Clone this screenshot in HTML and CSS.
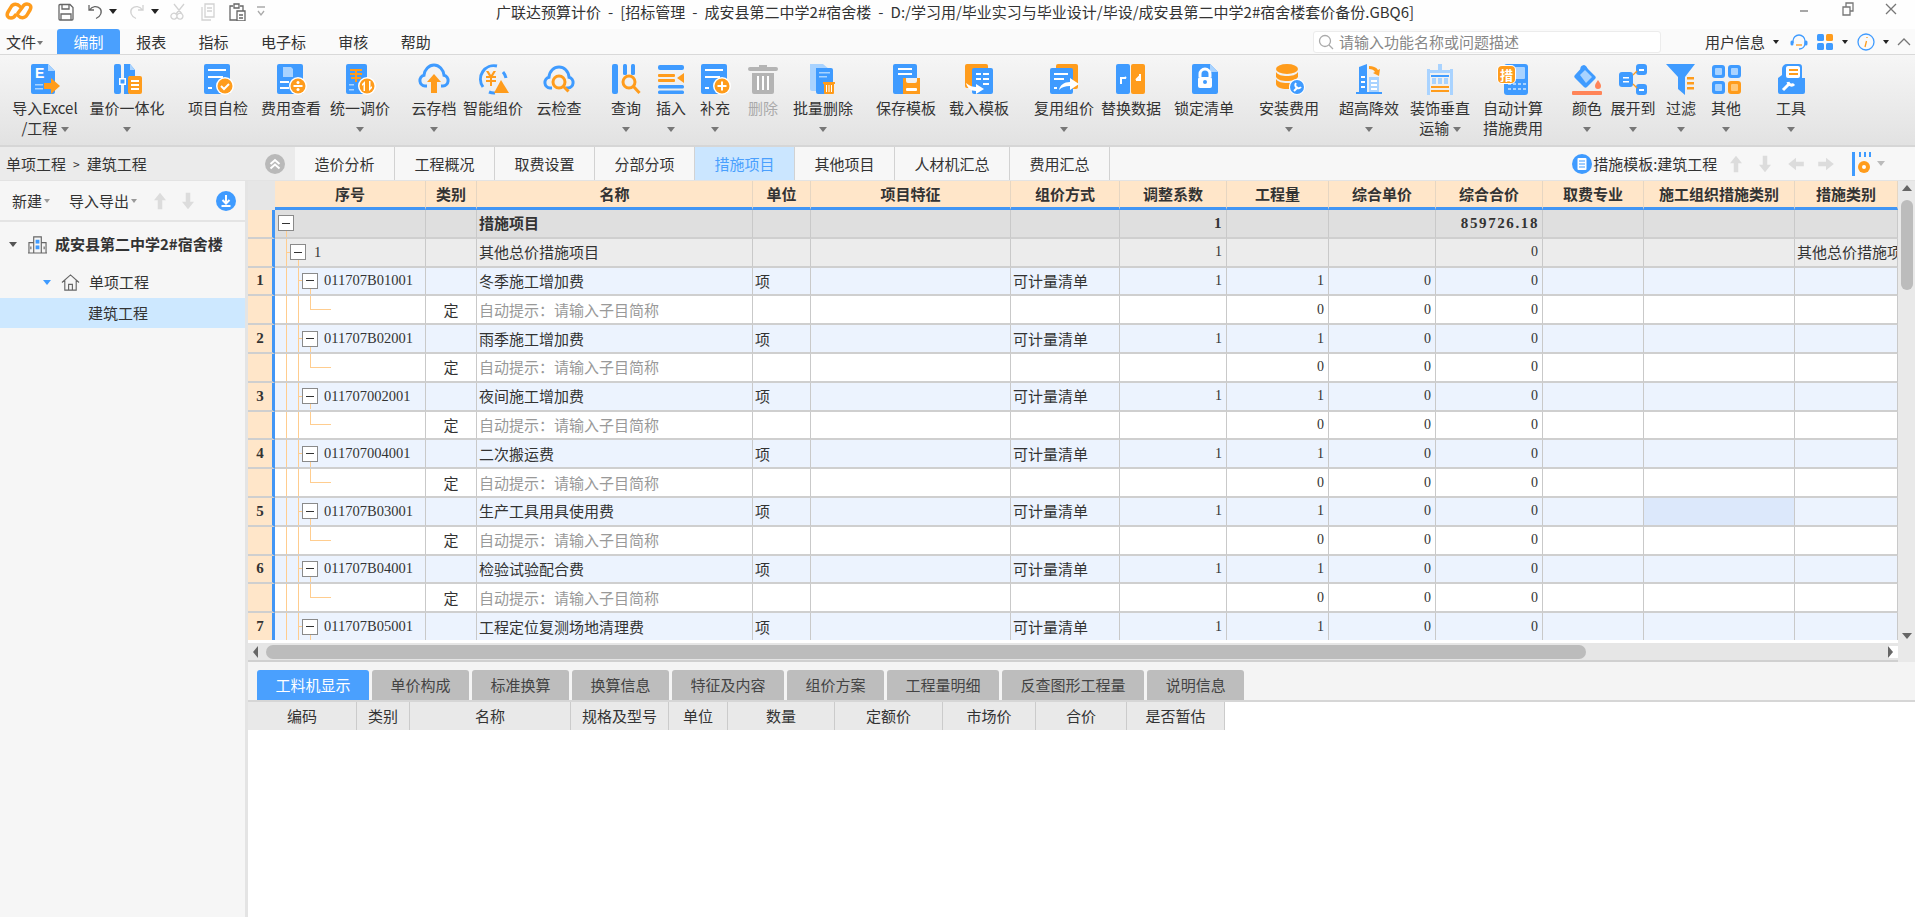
FILE: index.html
```html
<!DOCTYPE html>
<html lang="zh-CN">
<head>
<meta charset="utf-8">
<title>广联达预算计价</title>
<link rel="stylesheet" href="styles.css">
</head>
<body>
<header class="titlebar">
  <div class="qa">
    <svg class="logo" viewBox="0 0 28 18"><path class="logo-s" d="M15 4.500C12.500 1.500 8 1.500 6 5L3 10c-2 3.500 0 6 3 6 2 0 3.500-1 4.500-3"/><path class="logo-s" d="M13 13.500c2.500 3 7 3 9-.5l3-5c2-3.500 0-6-3-6-2 0-3.500 1-4.500 3L13 11"/></svg>
    <svg class="qi" viewBox="0 0 18 18"><path class="ln" d="M3 1.500h10l3 3V16a1 1 0 0 1-1 1H3a1 1 0 0 1-1-1V2.500a1 1 0 0 1 1-1zM5 2v4h7V2M4 17v-6h10v6"/></svg>
    <svg class="qi" viewBox="0 0 18 18"><path class="ln" d="M3 2v5h5M3.500 7C6 3 11 2.500 14 5.500c2.500 3 1 8-4 10"/></svg><span class="dd dk"></span>
    <svg class="qi" viewBox="0 0 18 18"><path class="ln lt" d="M15 2v5h-5M14.500 7C12 3 7 2.500 4 5.500c-2.500 3-1 8 4 10"/></svg><span class="dd dk"></span>
    <svg class="qi" viewBox="0 0 18 18"><path class="ln lt" d="M4 1l8 10M14 1L6 11M6 11a3 3 0 1 0 .1 .1M12 11a3 3 0 1 0 .1 .1"/></svg>
    <svg class="qi" viewBox="0 0 18 18"><path class="ln lt" d="M6 1h9v13H6zM3 4v13h9M8 5h5M8 8h5"/></svg>
    <svg class="qi" viewBox="0 0 18 18"><path class="ln" d="M5 3H2v14h7M12 3h3v5M6 1h5v4H6zM9 8h8v10H9zM11 12h4M11 15h4"/></svg>
    <svg class="qm" viewBox="0 0 8 12"><path class="ln lg" d="M0 1h8M1 5l3 4 3-4"/></svg>
  </div>
  <div class="apptitle">广联达预算计价 - [招标管理 - 成安县第二中学2#宿舍楼 - D:/学习用/毕业实习与毕业设计/毕设/成安县第二中学2#宿舍楼套价备份.GBQ6]</div>
  <div class="winbtns">
    <svg viewBox="0 0 14 14"><path class="ln gr" d="M2 9h8"/></svg>
    <svg viewBox="0 0 14 14"><path class="ln gr" d="M2 5h7v8H2zM5 5V1h7v8H9"/></svg>
    <svg viewBox="0 0 14 14"><path class="ln gr" d="M2 2l10 10M12 2L2 12"/></svg>
  </div>
</header>

<nav class="menubar">
  <span class="file">文件<span class="dd sm"></span></span>
  <span class="menu on">编制</span><span class="menu">报表</span><span class="menu">指标</span><span class="menu">电子标</span><span class="menu">审核</span><span class="menu">帮助</span>
  <div class="search">
    <svg viewBox="0 0 16 16"><circle class="ln sg" cx="7" cy="7" r="5.500"/><path class="ln sg" d="M11 11l4 4"/></svg>
    <span>请输入功能名称或问题描述</span>
  </div>
  <div class="userbox">
    <span>用户信息</span><span class="dd dk"></span>
    <svg class="ub1" viewBox="0 0 18 18"><path class="ln bl" d="M3 10V8a6 6 0 0 1 12 0v2c0 4-3 6-6 6"/><rect class="b" x="0.500" y="7.500" width="3" height="5" rx="1.500"/><rect class="b" x="14.500" y="7.500" width="3" height="5" rx="1.500"/><path class="ln or" d="M6 12h6"/></svg>
    <svg class="ub2" viewBox="0 0 18 18"><rect class="b" x="1" y="1" width="7" height="7" rx="1.500"/><rect class="o" x="10" y="1" width="7" height="7" rx="1.500"/><rect class="b" x="1" y="10" width="7" height="7" rx="1.500"/><rect class="b" x="10" y="10" width="7" height="7" rx="1.500"/></svg><span class="dd dk"></span>
    <svg class="ub3" viewBox="0 0 18 18"><circle class="ln bl" cx="9" cy="9" r="8"/><path class="ln or" d="M10 4v1M9.500 8L8 14"/></svg><span class="dd dk"></span>
    <svg class="ub4" viewBox="0 0 14 10"><path class="ln gr" d="M1 8l6-6 6 6"/></svg>
  </div>
</nav>

<section class="ribbon">
  <div class="tool"><svg viewBox="0 0 32 32"><path class="b" d="M4 1h15l7 7v21a2 2 0 0 1-2 2H4a2 2 0 0 1-2-2V3a2 2 0 0 1 2-2z"/><path class="lb" d="M19 1l7 7h-7z"/><text class="ic-t" x="6" y="15">E</text><path class="lb" d="M6 21h8v1.500H6zM6 25h8v1.500H6z"/><path class="o" d="M15 20h7v-5l9 8-9 8v-5h-7z"/></svg><p>导入Excel<br>/工程 <span class="dd"></span></p></div>
  <div class="tool"><svg viewBox="0 0 32 32"><rect class="b" x="3" y="1" width="7" height="30" rx="2"/><path class="b" d="M13 1h6l5 6v6h-6v18h-5z"/><path class="lb" d="M19 1l5 6h-5z"/><rect class="w" x="8" y="15" width="7" height="7"/><rect class="b" x="9.500" y="16.500" width="4" height="4"/><rect class="o" x="17" y="13" width="14" height="18" rx="2"/><path class="w" d="M20 17h8v2h-8zM20 21h8v2h-8zM20 25h8v2h-8z"/></svg><p>量价一体化<br><span class="dd"></span></p></div>
  <span></span>
  <div class="tool"><svg viewBox="0 0 32 32"><rect class="b" x="2" y="1" width="26" height="30" rx="2"/><path class="w" d="M6 6h18v2H6zM6 13h15v2H6zM6 24h4v2H6z"/><circle class="w" cx="23" cy="23" r="9"/><circle class="o" cx="23" cy="23" r="7.500"/><path class="ln wl" d="M19 23l3 3 5-5"/></svg><p>项目自检</p></div>
  <div class="tool"><svg viewBox="0 0 32 32"><rect class="b" x="2" y="1" width="26" height="30" rx="2"/><path class="lb" d="M8 4h8l2 2v8H8z"/><path class="w" d="M5 18h9v2H5zM5 24h9v2H5z"/><circle class="w" cx="23" cy="23" r="9"/><circle class="o" cx="23" cy="23" r="7.500"/><path class="w" d="M18.500 22h9v2h-9z"/><circle class="w" cx="23" cy="19.500" r="1.500"/><circle class="w" cx="23" cy="26.500" r="1.500"/></svg><p>费用查看</p></div>
  <div class="tool"><svg viewBox="0 0 32 32"><rect class="b" x="2" y="1" width="21" height="30" rx="2"/><path class="o" d="M6 6h12v2h-5v2h5v2h-5v2h4v2h-4v3h-2v-3H7v-2h4v-2H6v-2h5V8H6z"/><path class="lb" d="M5 21h5v1.500H5zM5 26h5v1.500H5z"/><circle class="w" cx="23" cy="23" r="9"/><circle class="o" cx="23" cy="23" r="7.500"/><path class="w" d="M21 18v10h-1.500v-6.500L18 23v-2zM25 28V18h1.500v6.500L28 23v2z"/></svg><p>统一调价<br><span class="dd"></span></p></div>
  <span></span>
  <div class="tool"><svg viewBox="0 0 32 32"><path class="ln bl th" d="M9 23H7a5.500 5.500 0 0 1-1-10.800C6.500 6.500 11 2 16 2s9.500 4.500 10 10.200A5.500 5.500 0 0 1 25 23h-2"/><path class="o" d="M16 11l7 8h-4v11h-6V19H9z"/></svg><p>云存档<br><span class="dd"></span></p></div>
  <div class="tool"><svg viewBox="0 0 32 32"><path class="ln bl th" d="M20 3A13.500 13.500 0 0 0 6 24M26 9a13 13 0 0 1 3 6M12 29a13 13 0 0 0 6 1"/><path class="o" d="M9 8h2.500l2.500 4 2.500-4H19l-3 5h3v2h-4v2h4v2h-4v4h-2v-4H9v-2h4v-2H9v-2h3z"/><path class="o" d="M24 17l8 13H17z"/></svg><p>智能组价</p></div>
  <div class="tool"><svg viewBox="0 0 32 32"><path class="ln bl th" d="M9 25H7a5.500 5.500 0 0 1-1-10.800C6.500 8 11 4 16 4s9.500 4 10 10.200A5.500 5.500 0 0 1 25 25h-2"/><circle class="ln or th" cx="16" cy="19" r="6"/><path class="ln or th" d="M20.500 23.500l5 5"/></svg><p>云检查</p></div>
  <span></span>
  <div class="tool"><svg viewBox="0 0 32 32"><rect class="b" x="2" y="1" width="6" height="30" rx="2"/><rect class="b" x="13" y="1" width="4" height="11" rx="1.500"/><rect class="b" x="21" y="1" width="4" height="11" rx="1.500"/><circle class="ln or th" cx="19" cy="19" r="6"/><path class="ln or th" d="M23.500 23.500l6 6.500"/></svg><p>查询<br><span class="dd"></span></p></div>
  <div class="tool"><svg viewBox="0 0 32 32"><rect class="b" x="3" y="2" width="26" height="5" rx="2"/><rect class="o" x="3" y="11" width="17" height="3" rx="1"/><rect class="o" x="3" y="16" width="17" height="3" rx="1"/><path class="o" d="M29 10v10l-7-5z"/><rect class="b" x="3" y="22" width="26" height="3.500" rx="1.500"/><rect class="b" x="3" y="27.500" width="26" height="3.500" rx="1.500"/></svg><p>插入<br><span class="dd"></span></p></div>
  <div class="tool"><svg viewBox="0 0 32 32"><rect class="b" x="2" y="1" width="26" height="30" rx="2"/><path class="w" d="M6 6h18v2H6zM6 13h15v2H6zM6 24h4v2H6z"/><circle class="w" cx="23" cy="23" r="9"/><circle class="o" cx="23" cy="23" r="7.500"/><path class="w" d="M22 18.500h2V22h3.500v2H24v3.500h-2V24h-3.500v-2H22z"/></svg><p>补充<br><span class="dd"></span></p></div>
  <div class="tool off"><svg viewBox="0 0 32 32"><path class="g" d="M3 4h9V2h8v2h9a1.500 1.500 0 0 1 0 4H3a1.500 1.500 0 0 1 0-4zM5 10h22v19a2 2 0 0 1-2 2H7a2 2 0 0 1-2-2z"/><path class="w" d="M10 13h2v14h-2zM15 13h2v14h-2zM20 13h2v14h-2z"/></svg><p>删除</p></div>
  <div class="tool"><svg viewBox="0 0 32 32"><path class="lb" d="M3 1h13l6 5v22H5a2 2 0 0 1-2-2z"/><path class="b" d="M9 5h15a2 2 0 0 1 2 2v22a2 2 0 0 1-2 2H11a2 2 0 0 1-2-2z"/><path class="lb" d="M12 9h11v1.500H12zM12 13h8v1.500h-8z"/><path class="o" d="M16 19h12v2h-1v9a1 1 0 0 1-1 1h-8a1 1 0 0 1-1-1v-9h-1z"/><path class="w" d="M19 22h1v7h-1zM21.500 22h1v7h-1zM24 22h1v7h-1z"/></svg><p>批量删除<br><span class="dd"></span></p></div>
  <span></span>
  <div class="tool"><svg viewBox="0 0 32 32"><path class="b" d="M5 1h20a2 2 0 0 1 2 2v12H14v16H5a2 2 0 0 1-2-2V3a2 2 0 0 1 2-2z"/><path class="w" d="M8 5h14v2H8zM8 10h14v2H8z"/><path class="o" d="M13 15h3v3a2 2 0 0 0 2 2h7a2 2 0 0 0 2-2v-3h3v16H13z"/><rect class="w" x="16" y="25" width="11" height="3" rx="1"/></svg><p>保存模板</p></div>
  <div class="tool"><svg viewBox="0 0 32 32"><rect class="o" x="2" y="1" width="23" height="24" rx="2"/><rect class="b" x="9" y="5" width="21" height="26" rx="2"/><path class="w" d="M13 10h5v2h-5zM20 10h6v2h-6zM13 15h5v2h-5zM20 15h6v2h-6zM20 20h6v2h-6z"/><path class="w" d="M3 20c4 3 7 4 10 4v-3l8 5-8 5v-3c-5 0-9-3-10-8z"/></svg><p>载入模板</p></div>
  <span></span>
  <div class="tool"><svg viewBox="0 0 32 32"><rect class="o" x="8" y="1" width="22" height="25" rx="2"/><rect class="b" x="2" y="5" width="23" height="26" rx="2"/><path class="w" d="M6 10h14v2H6zM6 15h10v2H6zM6 24h3v2H6z"/><path class="w" d="M11 27c1-5 5-8 11-8v-4l9 6-9 6v-4c-5 0-8 1-11 4z"/></svg><p>复用组价<br><span class="dd"></span></p></div>
  <div class="tool"><svg viewBox="0 0 32 32"><rect class="b" x="1" y="1" width="14" height="30" rx="2"/><rect class="o" x="16" y="1" width="14" height="30" rx="2"/><path class="ln wl" d="M6 21v-6h5M11 14l-1 1M11 15l-5 0"/><path class="ln wl" d="M25 11v6h-4M21 17l4-4"/></svg><p>替换数据</p></div>
  <div class="tool"><svg viewBox="0 0 32 32"><path class="b" d="M6 1h16l8 8v20a2 2 0 0 1-2 2H6a2 2 0 0 1-2-2V3a2 2 0 0 1 2-2z"/><path class="lb" d="M22 1l8 8h-8z"/><path class="ln wl th" d="M12 14v-3a5 5 0 0 1 10 0v3"/><rect class="w" x="10" y="14" width="14" height="11" rx="2"/><circle class="b" cx="17" cy="19" r="2"/></svg><p>锁定清单</p></div>
  <span></span>
  <div class="tool"><svg viewBox="0 0 32 32"><ellipse class="o" cx="14" cy="6" rx="11" ry="5"/><path class="o" d="M3 9c2 3 6 4 11 4s9-1 11-4v5c-2 3-6 4-11 4S5 17 3 14zM3 16c2 3 6 4 11 4h3l-1 6h-2C8 26 3 24 3 21z"/><circle class="w" cx="24" cy="24" r="8"/><circle class="b" cx="24" cy="24" r="7"/><path class="ln wl" d="M21 28l4-4M23 20a3 3 0 0 0 5 4"/></svg><p>安装费用<br><span class="dd"></span></p></div>
  <div class="tool"><svg viewBox="0 0 32 32"><path class="b" d="M6 4l8-3v28H6z"/><path class="lb" d="M16 14h10v15H16z"/><path class="w" d="M8 13h4v2H8zM8 18h4v2H8zM8 23h4v2H8z"/><path class="w" d="M18 17h6v2h-6zM18 21h6v2h-6zM18 25h6v2h-6z"/><path class="b" d="M3 29h26v2H3z"/><path class="o" d="M16 3c4 0 7 1 9 4l2-1-1 7-6-3 2-1c-1-2-3-3-6-3z"/></svg><p>超高降效<br><span class="dd"></span></p></div>
  <div class="tool"><svg viewBox="0 0 32 32"><path class="lb" d="M3 6h3v26H3zM26 6h3v26h-3zM3 7h26v3H3zM14 1h4v6h-4z"/><path class="b" d="M7 12h18v2H7z"/><path class="lb" d="M8 15h4v6H8zM14 15h4v6h-4zM20 15h4v6h-4z"/><path class="o" d="M7 23h18v2H7zM7 27h18v2H7z"/></svg><p>装饰垂直<br>运输 <span class="dd"></span></p></div>
  <div class="tool"><svg viewBox="0 0 32 32"><rect class="b" x="7" y="1" width="24" height="31" rx="3"/><rect class="lb" x="13" y="4" width="15" height="12" rx="1"/><path class="lb" d="M11 20h3v2h-3zM16 20h3v2h-3zM21 20h3v2h-3zM26 20h3v2h-3zM11 25h3v2h-3zM16 25h3v2h-3zM21 25h3v2h-3zM26 25h3v2h-3z"/><rect class="w" x="0" y="2" width="19" height="19" rx="5"/><rect class="o" x="1" y="3" width="17" height="17" rx="4"/><text class="ic-c" x="9.500" y="16.500">措</text></svg><p>自动计算<br>措施费用</p></div>
  <span></span>
  <div class="tool"><svg viewBox="0 0 32 32"><path class="b" d="M13 2l11 11c1 1 1 2 0 3l-8 8c-1 1-2 1-3 0L4 15c-1-1-1-2 0-3z"/><path class="lb" d="M9 12l5-5 7 7-6 6z"/><path class="ln bl" d="M10 6c0-3 4-5 6 0"/><path class="rd" d="M27 17c2 3 3 4 3 6a3 3 0 0 1-6 0c0-2 1-3 3-6z"/><rect class="rd" x="1" y="28" width="30" height="4" rx="1"/></svg><p>颜色<br><span class="dd"></span></p></div>
  <div class="tool"><svg viewBox="0 0 32 32"><rect class="b" x="2" y="9" width="14" height="15" rx="3"/><path class="w" d="M6 14h6v1.500H6zM6 18h6v1.500H6z"/><rect class="b" x="19" y="1" width="11" height="11" rx="3"/><rect class="b" x="19" y="21" width="11" height="11" rx="3"/><path class="w" d="M22 6h5v2h-5zM22 26h5v2h-5z"/><path class="ln or" d="M16 12l4-4M16 21l4 4"/></svg><p>展开到<br><span class="dd"></span></p></div>
  <div class="tool"><svg viewBox="0 0 32 32"><path class="b" d="M1 1h29L20 14v18l-7-6V14z"/><path class="o" d="M22 14h7v2.500h-7zM22 19h7v2.500h-7zM22 24h7v2.500h-7z"/></svg><p>过滤<br><span class="dd"></span></p></div>
  <div class="tool"><svg viewBox="0 0 32 32"><rect class="b" x="2" y="2" width="13" height="13" rx="3"/><rect class="lb" x="5" y="5" width="7" height="7" rx="1"/><rect class="b" x="18" y="2" width="13" height="13" rx="3"/><rect class="lb" x="21" y="5" width="7" height="7" rx="1"/><rect class="b" x="2" y="18" width="13" height="13" rx="3"/><rect class="lb" x="5" y="21" width="7" height="7" rx="1"/><rect class="o" x="18" y="18" width="13" height="13" rx="3"/><rect class="lo" x="21" y="21" width="7" height="7" rx="1"/></svg><p>其他<br><span class="dd"></span></p></div>
  <span></span>
  <div class="tool"><svg viewBox="0 0 32 32"><path class="b" d="M12 1h12a3 3 0 0 1 3 3v11h3v14a2 2 0 0 1-2 2H5a2 2 0 0 1-2-2V15l4-3V6a5 5 0 0 1 5-5z"/><rect class="w" x="11" y="3" width="14" height="12" rx="2"/><path class="o" d="M14 6h9v2h-9zM14 10h9v2h-9z"/><path class="ln wl th" d="M8 27l7-7M13 19a3.500 3.500 0 0 0 6 2"/></svg><p>工具<br><span class="dd"></span></p></div>
</section>

<div class="workbar">
  <div class="crumb"><span>单项工程</span><span class="gt">&gt;</span><span>建筑工程</span>
    <svg class="collapse" viewBox="0 0 20 20"><circle class="cg" cx="10" cy="10" r="10"/><path class="ln wl" d="M5.500 10L10 6l4.500 4M5.500 14.500L10 10.500l4.500 4"/></svg>
  </div>
  <div class="tabs">
    <span class="tab">造价分析</span><span class="tab">工程概况</span><span class="tab">取费设置</span><span class="tab">分部分项</span><span class="tab cur">措施项目</span><span class="tab">其他项目</span><span class="tab">人材机汇总</span><span class="tab">费用汇总</span>
  </div>
  <div class="tpl">
    <svg class="tpl-i" viewBox="0 0 20 20"><circle class="b" cx="10" cy="10" r="10"/><rect class="w" x="5.500" y="4" width="9" height="12" rx="1"/><path class="b" d="M7 6.500h6v1H7zM7 9.500h6v1H7zM7 12.500h6v1H7z"/></svg>
    <span class="tpl-t">措施模板:建筑工程</span>
    <svg class="ar" viewBox="0 0 18 24"><path class="fa" d="M9 1l8 10h-5v12H6V11H1z"/></svg>
    <svg class="ar" viewBox="0 0 18 24"><path class="fa" d="M9 23l8-10h-5V1H6v12H1z"/></svg>
    <svg class="ar h" viewBox="0 0 22 18"><path class="fa" d="M1 9l10-8v5h10v6H11v5z"/></svg>
    <svg class="ar h" viewBox="0 0 22 18"><path class="fa" d="M21 9L11 1v5H1v6h10v5z"/></svg>
    <svg class="gear" viewBox="0 0 20 26"><rect class="b" x="1" y="1" width="3" height="24"/><path class="b" d="M8 1h2v5H8zM13 1h2v5h-2zM18 1h2v5h-2z"/><circle class="o" cx="13" cy="16" r="6"/><circle class="w" cx="13" cy="16" r="2"/></svg><span class="dd lg"></span>
  </div>
</div>

<main class="body">
  <aside class="side">
    <div class="sidebar-tools">
      <span>新建</span><span class="dd gy"></span>
      <span class="st2">导入导出</span><span class="dd gy"></span>
      <svg class="ar st3" viewBox="0 0 18 24"><path class="fa" d="M9 1l8 10h-5v12H6V11H1z"/></svg>
      <svg class="ar" viewBox="0 0 18 24"><path class="fa" d="M9 23l8-10h-5V1H6v12H1z"/></svg>
      <svg class="st4" viewBox="0 0 20 20"><circle class="b" cx="10" cy="10" r="10"/><path class="ln wl" d="M10 4v8M6.500 9l3.500 3.500L13.500 9M5.500 15h9"/></svg>
    </div>
    <div class="node n1"><span class="caret"></span>
      <svg viewBox="0 0 20 20"><path class="ln gd" d="M6 19V2h8v17M1 19V8h5M14 8h5v11M0 19h20M3 12v3M17 12v3"/><rect class="b" x="8" y="5" width="4" height="4"/><rect class="b" x="8" y="11" width="4" height="4"/></svg>
      <b>成安县第二中学2#宿舍楼</b></div>
    <div class="node n2"><span class="caret blue"></span>
      <svg viewBox="0 0 20 20"><path class="ln gd" d="M1 10l9-8 9 8M4 8v10h12V8M8 18v-6h4v6"/></svg>
      <span>单项工程</span></div>
    <div class="node n3">建筑工程</div>
  </aside>

  <div class="right">
    <section class="sheet">
      <div class="grid-wrap">
        <div class="row head"><span class="corner"></span><b>序号</b><b>类别</b><b>名称</b><b>单位</b><b>项目特征</b><b>组价方式</b><b>调整系数</b><b>工程量</b><b>综合单价</b><b>综合合价</b><b>取费专业</b><b>施工组织措施类别</b><b>措施类别</b></div>

        <div class="row r0"><b class="no"></b><div class="seq lv0"><span class="box"></span></div><i></i><div class="bold">措施项目</div><i></i><i></i><i></i><div class="n bn">1</div><i></i><i></i><div class="n bn">859726.18</div><i></i><i></i><i></i></div>
        <div class="row r1"><b class="no"></b><div class="seq lv1"><span class="box"></span><span class="num">1</span></div><i></i><div>其他总价措施项目</div><i></i><i></i><i></i><div class="n">1</div><i></i><i></i><div class="n">0</div><i></i><i></i><div>其他总价措施项目</div></div>

        <div class="row code"><b class="no">1</b><div class="seq lv2"><span class="box"></span><span class="num">011707B01001</span></div><i></i><div>冬季施工增加费</div><div>项</div><i></i><div>可计量清单</div><div class="n">1</div><div class="n">1</div><div class="n">0</div><div class="n">0</div><i></i><i></i><i></i></div>
        <div class="row sub"><b class="no"></b><div class="seq lv3"></div><div class="c">定</div><div class="hint">自动提示：请输入子目简称</div><i></i><i></i><i></i><i></i><div class="n">0</div><div class="n">0</div><div class="n">0</div><i></i><i></i><i></i></div>

        <div class="row code"><b class="no">2</b><div class="seq lv2"><span class="box"></span><span class="num">011707B02001</span></div><i></i><div>雨季施工增加费</div><div>项</div><i></i><div>可计量清单</div><div class="n">1</div><div class="n">1</div><div class="n">0</div><div class="n">0</div><i></i><i></i><i></i></div>
        <div class="row sub"><b class="no"></b><div class="seq lv3"></div><div class="c">定</div><div class="hint">自动提示：请输入子目简称</div><i></i><i></i><i></i><i></i><div class="n">0</div><div class="n">0</div><div class="n">0</div><i></i><i></i><i></i></div>

        <div class="row code"><b class="no">3</b><div class="seq lv2"><span class="box"></span><span class="num">011707002001</span></div><i></i><div>夜间施工增加费</div><div>项</div><i></i><div>可计量清单</div><div class="n">1</div><div class="n">1</div><div class="n">0</div><div class="n">0</div><i></i><i></i><i></i></div>
        <div class="row sub"><b class="no"></b><div class="seq lv3"></div><div class="c">定</div><div class="hint">自动提示：请输入子目简称</div><i></i><i></i><i></i><i></i><div class="n">0</div><div class="n">0</div><div class="n">0</div><i></i><i></i><i></i></div>

        <div class="row code"><b class="no">4</b><div class="seq lv2"><span class="box"></span><span class="num">011707004001</span></div><i></i><div>二次搬运费</div><div>项</div><i></i><div>可计量清单</div><div class="n">1</div><div class="n">1</div><div class="n">0</div><div class="n">0</div><i></i><i></i><i></i></div>
        <div class="row sub"><b class="no"></b><div class="seq lv3"></div><div class="c">定</div><div class="hint">自动提示：请输入子目简称</div><i></i><i></i><i></i><i></i><div class="n">0</div><div class="n">0</div><div class="n">0</div><i></i><i></i><i></i></div>

        <div class="row code"><b class="no">5</b><div class="seq lv2"><span class="box"></span><span class="num">011707B03001</span></div><i></i><div>生产工具用具使用费</div><div>项</div><i></i><div>可计量清单</div><div class="n">1</div><div class="n">1</div><div class="n">0</div><div class="n">0</div><i></i><i class="picked"></i><i></i></div>
        <div class="row sub"><b class="no"></b><div class="seq lv3"></div><div class="c">定</div><div class="hint">自动提示：请输入子目简称</div><i></i><i></i><i></i><i></i><div class="n">0</div><div class="n">0</div><div class="n">0</div><i></i><i></i><i></i></div>

        <div class="row code"><b class="no">6</b><div class="seq lv2"><span class="box"></span><span class="num">011707B04001</span></div><i></i><div>检验试验配合费</div><div>项</div><i></i><div>可计量清单</div><div class="n">1</div><div class="n">1</div><div class="n">0</div><div class="n">0</div><i></i><i></i><i></i></div>
        <div class="row sub"><b class="no"></b><div class="seq lv3"></div><div class="c">定</div><div class="hint">自动提示：请输入子目简称</div><i></i><i></i><i></i><i></i><div class="n">0</div><div class="n">0</div><div class="n">0</div><i></i><i></i><i></i></div>

        <div class="row code"><b class="no">7</b><div class="seq lv2"><span class="box"></span><span class="num">011707B05001</span></div><i></i><div>工程定位复测场地清理费</div><div>项</div><i></i><div>可计量清单</div><div class="n">1</div><div class="n">1</div><div class="n">0</div><div class="n">0</div><i></i><i></i><i></i></div>
      </div>
      <div class="vscroll"><span class="tri up"></span><span class="vthumb"></span><span class="tri down"></span></div>
      <div class="hscroll"><span class="tri left"></span><span class="hthumb"></span><span class="tri right"></span></div>
    </section>
    <div class="subtabs">
      <span class="subtab on">工料机显示</span><span class="subtab">单价构成</span><span class="subtab">标准换算</span><span class="subtab">换算信息</span><span class="subtab">特征及内容</span><span class="subtab">组价方案</span><span class="subtab">工程量明细</span><span class="subtab">反查图形工程量</span><span class="subtab">说明信息</span>
    </div>
    <div class="detail"><span>编码</span><span>类别</span><span>名称</span><span>规格及型号</span><span>单位</span><span>数量</span><span>定额价</span><span>市场价</span><span>合价</span><span>是否暂估</span></div>
  </div>
</main>
</body>
</html>
```

FILE: styles.css
```css
* { box-sizing: border-box; }
html, body { margin: 0; height: 917px; overflow: hidden; }
body {
  display: flex; flex-direction: column; background: #fff; color: #333;
  font: 15px/20px "Noto Sans CJK SC", "Noto Sans", sans-serif;
}
p { margin: 0; }

/* svg paint helpers */
.b { fill: #3f9bff; } .o { fill: #ff9c1c; } .w { fill: #fff; } .lb { fill: #a9d3ff; }
.lo { fill: #ffc879; } .g { fill: #b4b4b4; } .rd { fill: #ff8458; } .cg { fill: #b9b9b9; } .fa { fill: #dcdcdc; }
.ln { fill: none; stroke: #666; stroke-width: 1.300; }
.lt { stroke: #d2d2d2; } .lg { stroke: #aaa; } .gr { stroke: #777; } .sg { stroke: #aaa; }
.bl { stroke: #3f9bff; } .or { stroke: #ff9c1c; } .wl { stroke: #fff; stroke-width: 2; } .gd { stroke: #666; stroke-width: 1.200; }
.th { stroke-width: 3; }
.logo-s { fill: none; stroke: #ff9c1c; stroke-width: 3.500; stroke-linecap: round; }
.ic-t { fill: #fff; font: bold 14px "Liberation Sans", sans-serif; }
.ic-c { fill: #fff; font: bold 13px "Noto Sans CJK SC", sans-serif; text-anchor: middle; }

/* dropdown triangle */
.dd {
  display: inline-block; width: 0; height: 0; vertical-align: middle;
  border-left: 4px solid transparent; border-right: 4px solid transparent; border-top: 5px solid #777;
}
.dd.dk { border-top-color: #222; }
.dd.sm { border-left-width: 3px; border-right-width: 3px; border-top-width: 4px; margin-left: 1px; }
.dd.gy { border-top-color: #999; border-left-width: 3px; border-right-width: 3px; border-top-width: 4px; margin-left: 2px; }
.dd.lg { border-top-color: #bbb; }

/* title bar */
.titlebar {
  flex: none; height: 29px; display: grid; grid-template-columns: 1fr auto 1fr; align-items: center;
  background: #fefefe;
}
.qa { display: flex; align-items: center; gap: 11px; }
.qa .dd { margin-left: -6px; }
.logo { width: 28px; height: 18px; margin: 0 13px 8px 5px; }
.qi { width: 18px; height: 18px; margin-bottom: 6px; }
.qa .dd { margin-bottom: 6px; }
.qm { width: 8px; height: 12px; margin-bottom: 6px; }
.apptitle { white-space: nowrap; padding: 0 5px 5px 0; word-spacing: 3.700px; }
.winbtns { display: flex; justify-content: flex-end; gap: 29px; padding: 0 17px 11px 0; }
.winbtns svg { width: 14px; height: 14px; }

/* menu */
.menubar {
  flex: none; height: 26px; display: flex; align-items: center; background: #fafafa;
  border-bottom: 1px solid #d9d9d9;
}
.file { width: 57px; padding-left: 6px; white-space: nowrap; }
.menu { height: 25px; padding: 0 16.200px; line-height: 26px; white-space: nowrap; }
.menu.on {
  width: 63px; text-align: center; background: #4aa0fe; color: #fff; border-radius: 3px 3px 0 0;
  align-self: flex-start;
}
.search {
  margin-left: 866px; width: 348px; height: 22px; display: flex; align-items: center; gap: 5px; padding-left: 4px;
  background: #fff; border: 1px solid #ececec; border-radius: 3px; color: #888;
}
.search svg { width: 16px; height: 16px; }
.userbox { flex: 1; display: flex; align-items: center; padding-left: 44px; white-space: nowrap; }
.userbox .dd { margin-left: 8px; border-left-width: 3px; border-right-width: 3px; border-top-width: 4px; }
.userbox svg { width: 18px; height: 18px; }
.ub1 { margin-left: 11px; }
.ub2 { margin-left: 8px; }
.ub3 { margin-left: 9px; }
.userbox .ub4 { width: 14px; height: 10px; margin-left: 8px; }

/* ribbon */
.ribbon {
  flex: none; height: 92px; display: grid; align-items: start; justify-items: center;
  grid-template-columns: 90px 74px 18px 72px 74px 64px 10px 64px 54px 78px 8px 40px 50px 38px 58px 62px 16px 72px 74px 12px 72px 62px 84px 4px 78px 82px 60px 86px 6px 50px 42px 54px 36px 16px 62px;
  background: linear-gradient(#f6f6f6, #e2e2e2);
  border-bottom: 2px solid #d6d6d6;
}
.tool { display: flex; flex-direction: column; align-items: center; padding-top: 8px; white-space: nowrap; text-align: center; }
.tool svg { width: 32px; height: 32px; }
.tool p { margin-top: 3px; }
.tool.off { color: #aaa; }

/* work bar */
.workbar { flex: none; height: 34px; display: flex; background: #f7f7f7; border-bottom: 1px solid #e3e3e3; }
.crumb {
  width: 295px; display: flex; align-items: center; padding-left: 6px; gap: 7px; background: #ebebeb;
}
.gt { font-size: 12px; }
.collapse { width: 20px; height: 20px; margin-left: 111px; }
.tabs { display: flex; }
.tab { padding: 0 19.500px; line-height: 34px; border-right: 1px solid #d2d2d2; white-space: nowrap; background: #f7f7f7; }
.tab.cur { background: #cbe6ff; color: #4aa0fe; }
.tpl { flex: 1; display: flex; align-items: center; padding-left: 462px; white-space: nowrap; }
.tpl-i { width: 20px; height: 20px; }
.tpl-t { margin: 0 12px 0 1px; }
.ar { width: 14px; height: 18px; margin-right: 15px; }
.ar.h { width: 18px; height: 14px; margin-right: 12px; }
.gear { width: 20px; height: 26px; margin: 0 6px 0 4px; }

/* body */
.body { flex: 1; min-height: 0; display: flex; }
.side { flex: none; width: 248px; background: #f6f6f6; border-right: 3px solid #e4e4e4; }
.sidebar-tools {
  height: 41px; display: flex; align-items: center; padding-left: 12px; border-bottom: 2px solid #e4e4e4;
}
.st2 { margin-left: 19px; }
.ar.st3 { margin-left: 16px; margin-right: 14px; }
.st4 { width: 20px; height: 20px; margin-left: 6px; }
.node { display: flex; align-items: center; white-space: nowrap; }
.node svg { width: 19px; height: 19px; }
.n1 { height: 44px; padding-left: 9px; }
.n1 svg { margin: 0 8px 0 11px; }
.n2 { height: 32px; padding-left: 43px; }
.n2 svg { margin: 0 9px 0 10px; }
.n3 { height: 30px; padding-left: 88px; background: #cde8ff; }
.caret { width: 0; height: 0; border-left: 4px solid transparent; border-right: 4px solid transparent; border-top: 5px solid #555; }
.caret.blue { border-top-color: #3f9bff; }

.right { flex: 1; min-width: 0; display: flex; flex-direction: column; background: #fff; }
.sheet { flex: none; display: grid; grid-template-columns: 1650px 17px; grid-template-rows: 462px 19px; }
.grid-wrap { overflow: hidden; border-bottom: 3px solid #fff; background: #fff; }

.row {
  display: grid; height: 28.800px; line-height: 20px;
  grid-template-columns: 27px 151px 51px 276px 58px 200px 109px 107px 102px 107px 107px 101px 151px 103px;
}
.row > * {
  display: flex; align-items: center; min-width: 0; overflow: hidden; white-space: nowrap;
  padding: 0 2px; font-style: normal; font-weight: 400;
  border-right: 1px solid #c9c9c9; border-bottom: 2px solid #cfcfcf;
}
.head { height: 29px; background: #ffe6c9; }
.head > * { justify-content: center; font-weight: 700; border-bottom: 3px solid #4296f5; border-right-color: #e6d6c2; }
.row.head > .corner { background: #e6e6e6; border-right: 0; border-bottom: 0; }
.r0 { background: #dfdfdf; } .r1 { background: #ececec; } .code { background: #ecf3fe; } .sub { background: #fff; }
.row > .no {
  justify-content: center; background: #ffe6c9; border-right: 3px solid #4296f5; padding: 0;
  font: 700 15px "Liberation Serif", serif;
}
.row > .bold { font-weight: 700; }
.row > .n { justify-content: flex-end; padding-right: 4px; font: 14px "Liberation Serif", serif; }
.row > .bn { font-weight: 700; font-size: 15px; letter-spacing: 1.600px; padding-right: 3px; }
.row > .c { justify-content: center; }
.row > .hint { color: #999; }
.row > .picked { background: #dce8fb; }
.num { font: 14.500px "Liberation Serif", serif; }

.seq { --g: linear-gradient(#ffcd8f, #ffcd8f); background-repeat: no-repeat; }
.row > .lv0 { padding-left: 3px; background-image: var(--g); background-size: 1px 30%; background-position: 11px 100%; }
.row > .lv1 {
  padding-left: 15px; gap: 8px;
  background-image: var(--g), var(--g), var(--g);
  background-size: 1px 100%, 1px 30%, 4px 1px;
  background-position: 11px 0, 23px 100%, 11px 50%;
}
.row > .lv2 {
  padding-left: 27px; gap: 6px;
  background-image: var(--g), var(--g), var(--g), var(--g);
  background-size: 1px 100%, 1px 100%, 4px 1px, 1px 30%;
  background-position: 11px 0, 23px 0, 23px 50%, 35px 100%;
}
.row > .lv3 {
  background-image: var(--g), var(--g), var(--g), var(--g);
  background-size: 1px 100%, 1px 100%, 1px 50%, 21px 1px;
  background-position: 11px 0, 23px 0, 35px 0, 35px 50%;
}
.box {
  flex: none; width: 16px; height: 16px; display: flex; align-items: center; justify-content: center;
  background: #fff; border: 1px solid #8a8a8a;
}
.box::before { content: ""; width: 8px; height: 1px; background: #333; }

/* scrollbars */
.vscroll { grid-row: 1 / span 2; grid-column: 2; display: flex; flex-direction: column; align-items: center; background: #e9e9e9; padding-top: 4px; }
.vthumb { width: 12px; height: 90px; margin-top: 9px; border-radius: 6px; background: #bcbcbc; }
.hscroll { display: flex; align-items: center; background: #e6e6e6; border-bottom: 2px solid #d0d0d0; padding-left: 5px; }
.hthumb { width: 1320px; height: 14px; margin-left: 8px; border-radius: 7px; background: #bcbcbc; }
.tri { width: 0; height: 0; border: 4px solid transparent; }
.tri.up { border-top: 0; border-bottom: 6px solid #666; border-left-width: 5px; border-right-width: 5px; }
.tri.down { margin-top: auto; margin-bottom: 23px; border-bottom: 0; border-top: 6px solid #666; border-left-width: 5px; border-right-width: 5px; }
.tri.left { border-left: 0; border-right: 5px solid #666; border-top-width: 6px; border-bottom-width: 6px; }
.tri.right { margin-left: 302px; border-right: 0; border-left: 5px solid #666; border-top-width: 6px; border-bottom-width: 6px; }

/* sub tabs + detail header */
.subtabs {
  flex: none; height: 40px; display: flex; align-items: flex-end; gap: 3px; padding-left: 9px;
  background: #f4f4f4; border-bottom: 2px solid #d6d6d6;
}
.subtab {
  height: 30px; line-height: 30px; padding: 0 18.500px; background: #bdbdbd; color: #444;
  border-radius: 3px 3px 0 0; white-space: nowrap;
}
.subtab.on { background: #4aa0fe; color: #fff; }
.detail {
  flex: none; width: 977px; height: 28px; display: grid;
  grid-template-columns: 109px 53px 161px 98px 59px 107px 108px 93px 91px 98px;
  background: #e9e9e9;
}
.detail span { text-align: center; line-height: 28px; white-space: nowrap; border-right: 1px solid #cbcbcb; }
```
